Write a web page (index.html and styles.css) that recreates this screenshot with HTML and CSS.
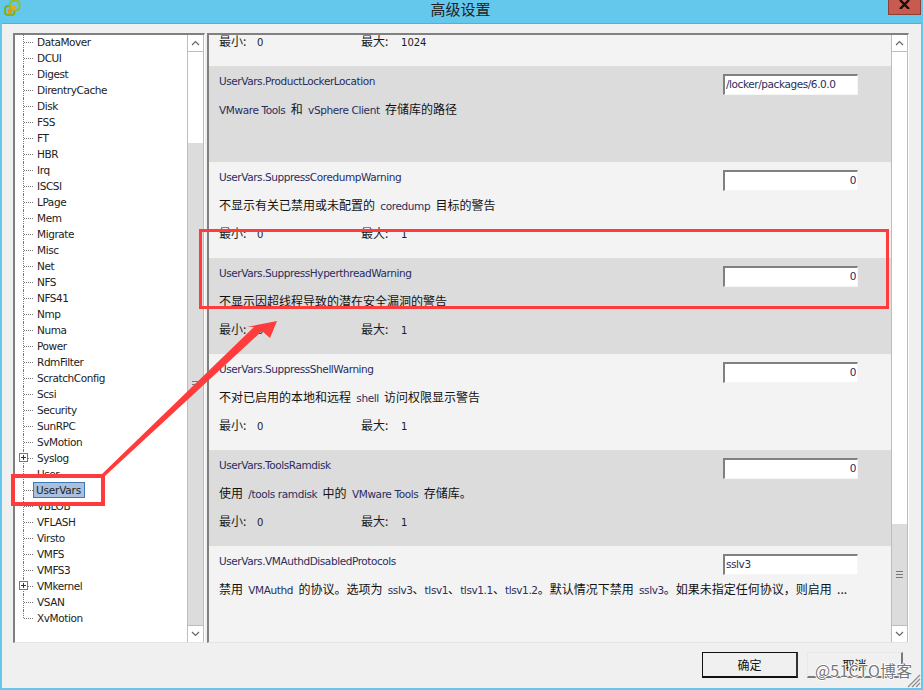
FILE: index.html
```html
<!DOCTYPE html>
<html lang="zh">
<head>
<meta charset="utf-8">
<title>高级设置</title>
<link rel="stylesheet" href="styles.css">
</head>
<body>
<div class="window">
  <header class="titlebar">
    <svg class="app-icon" width="17" height="16" viewBox="0 0 17 16">
      <rect x="1" y="6" width="9.5" height="9" rx="3" fill="none" stroke="#7faf1e" stroke-width="2"/>
      <rect x="6" y="1" width="9.5" height="9" rx="3" fill="none" stroke="#93c02a" stroke-width="2"/>
      <rect x="7" y="5" width="5" height="5" fill="#f2a51c"/>
      <rect x="4" y="9" width="4" height="4.5" fill="#e8931a"/>
    </svg>
    <span class="title">高级设置</span>
    <span class="close"><svg width="13" height="9" viewBox="0 0 13 9"><path d="M2 0 L11 9 M11 0 L2 9" stroke="#111" stroke-width="2.4"/></svg></span>
  </header>
  <main class="content">
    <div class="panes">
      <nav class="tree-pane">
        <ul class="tree">
          <li class="node"><span class="label">DataMover</span></li>
          <li class="node"><span class="label">DCUI</span></li>
          <li class="node"><span class="label">Digest</span></li>
          <li class="node"><span class="label">DirentryCache</span></li>
          <li class="node"><span class="label">Disk</span></li>
          <li class="node"><span class="label">FSS</span></li>
          <li class="node"><span class="label">FT</span></li>
          <li class="node"><span class="label">HBR</span></li>
          <li class="node"><span class="label">Irq</span></li>
          <li class="node"><span class="label">ISCSI</span></li>
          <li class="node"><span class="label">LPage</span></li>
          <li class="node"><span class="label">Mem</span></li>
          <li class="node"><span class="label">Migrate</span></li>
          <li class="node"><span class="label">Misc</span></li>
          <li class="node"><span class="label">Net</span></li>
          <li class="node"><span class="label">NFS</span></li>
          <li class="node"><span class="label">NFS41</span></li>
          <li class="node"><span class="label">Nmp</span></li>
          <li class="node"><span class="label">Numa</span></li>
          <li class="node"><span class="label">Power</span></li>
          <li class="node"><span class="label">RdmFilter</span></li>
          <li class="node"><span class="label">ScratchConfig</span></li>
          <li class="node"><span class="label">Scsi</span></li>
          <li class="node"><span class="label">Security</span></li>
          <li class="node"><span class="label">SunRPC</span></li>
          <li class="node"><span class="label">SvMotion</span></li>
          <li class="node expandable"><i class="plus"></i><span class="label">Syslog</span></li>
          <li class="node"><span class="label">User</span></li>
          <li class="node"><span class="label selected">UserVars</span></li>
          <li class="node"><span class="label">VBLOB</span></li>
          <li class="node"><span class="label">VFLASH</span></li>
          <li class="node"><span class="label">Virsto</span></li>
          <li class="node"><span class="label">VMFS</span></li>
          <li class="node"><span class="label">VMFS3</span></li>
          <li class="node expandable"><i class="plus"></i><span class="label">VMkernel</span></li>
          <li class="node"><span class="label">VSAN</span></li>
          <li class="node last"><span class="label">XvMotion</span></li>
        </ul>
        <div class="scrollbar">
          <span class="sb-btn"><svg width="9" height="6" viewBox="0 0 9 6"><path d="M1 5 L4.5 1.5 L8 5" fill="none" stroke="#666" stroke-width="1.2"/></svg></span>
          <span class="sb-track tree-track"></span>
          <span class="sb-thumb"><i class="grip"></i></span>
          <span class="sb-btn"><svg width="9" height="6" viewBox="0 0 9 6"><path d="M1 1 L4.5 4.5 L8 1" fill="none" stroke="#666" stroke-width="1.2"/></svg></span>
        </div>
      </nav>
      <section class="settings-pane">
        <div class="rows">
          <article class="row light partial">
            <div class="info"><p class="range"><span class="min">最小: <b>0</b></span><span class="max">最大: <b>1024</b></span></p></div>
          </article>
          <article class="row dark">
            <div class="info"><div class="name">UserVars.ProductLockerLocation</div><p class="desc"><span class="en">VMware Tools</span> 和 <span class="en">vSphere Client</span> 存储库的路径</p></div>
            <input class="field" type="text" value="/locker/packages/6.0.0">
          </article>
          <article class="row light">
            <div class="info"><div class="name">UserVars.SuppressCoredumpWarning</div><p class="desc">不显示有关已禁用或未配置的 <span class="en">coredump</span> 目标的警告</p><p class="range"><span class="min">最小: <b>0</b></span><span class="max">最大: <b>1</b></span></p></div>
            <input class="field num" type="text" value="0">
          </article>
          <article class="row dark">
            <div class="info"><div class="name">UserVars.SuppressHyperthreadWarning</div><p class="desc">不显示因超线程导致的潜在安全漏洞的警告</p><p class="range"><span class="min">最小: <b>0</b></span><span class="max">最大: <b>1</b></span></p></div>
            <input class="field num" type="text" value="0">
          </article>
          <article class="row light">
            <div class="info"><div class="name">UserVars.SuppressShellWarning</div><p class="desc">不对已启用的本地和远程 <span class="en">shell</span> 访问权限显示警告</p><p class="range"><span class="min">最小: <b>0</b></span><span class="max">最大: <b>1</b></span></p></div>
            <input class="field num" type="text" value="0">
          </article>
          <article class="row dark">
            <div class="info"><div class="name">UserVars.ToolsRamdisk</div><p class="desc">使用 <span class="en">/tools ramdisk</span> 中的 <span class="en">VMware Tools</span> 存储库。</p><p class="range"><span class="min">最小: <b>0</b></span><span class="max">最大: <b>1</b></span></p></div>
            <input class="field num" type="text" value="0">
          </article>
          <article class="row light">
            <div class="info"><div class="name">UserVars.VMAuthdDisabledProtocols</div><p class="desc">禁用 <span class="en">VMAuthd</span> 的协议。选项为 <span class="en">sslv3</span>、<span class="en">tlsv1</span>、<span class="en">tlsv1.1</span>、<span class="en">tlsv1.2</span>。默认情况下禁用 <span class="en">sslv3</span>。如果未指定任何协议，则启用 ...</p></div>
            <input class="field" type="text" value="sslv3">
          </article>
        </div>
        <div class="scrollbar">
          <span class="sb-btn"><svg width="9" height="6" viewBox="0 0 9 6"><path d="M1 5 L4.5 1.5 L8 5" fill="none" stroke="#666" stroke-width="1.2"/></svg></span>
          <span class="sb-track list-track"></span>
          <span class="sb-thumb"><i class="grip"></i></span>
          <span class="sb-btn"><svg width="9" height="6" viewBox="0 0 9 6"><path d="M1 1 L4.5 4.5 L8 1" fill="none" stroke="#666" stroke-width="1.2"/></svg></span>
        </div>
      </section>
    </div>
    <footer class="actions">
      <button class="btn primary" type="button">确定</button>
      <button class="btn" type="button">取消</button>
    </footer>
  </main>
  <svg class="annotations" width="923" height="690" viewBox="0 0 923 690">
    <rect class="mark thick" x="13" y="476" width="90" height="28"/>
    <rect class="mark" x="200.5" y="230.5" width="687" height="77"/>
    <polygon class="arrow" points="277,321 270,338 262,331 105,476 102,474 254,327 247,327"/>
  </svg>
  <svg class="resize-grip" width="16" height="16" viewBox="0 0 16 16"><path d="M15 3 L3 15 M15 7 L7 15 M15 11 L11 15" stroke="#8d8d8d" stroke-width="1.2"/></svg>
  <span class="watermark">@51CTO博客</span>
</div>
</body>
</html>
```
FILE: styles.css
```css
* { box-sizing: border-box; }
html, body { margin: 0; padding: 0; }
body { width: 923px; height: 690px; overflow: hidden; background: #64c7ec; font-family: "Noto Sans", "Noto Sans CJK SC", sans-serif; font-size: 11px; color: #1c1c1c; }
.window { position: relative; width: 923px; height: 690px; padding: 0 2px 2px; display: flex; flex-direction: column; }
.titlebar { height: 23px; flex: none; position: relative; display: flex; justify-content: center; }
.app-icon { position: absolute; left: 2px; top: 0; }
.title { font: 15px/18px "Noto Sans CJK SC", sans-serif; color: #222; margin-left: -2px; }
.close { position: absolute; right: 0; top: 0; width: 33px; height: 15px; background: #c75b50; border: 1px solid #8c4038; border-top: 0; display: flex; align-items: flex-start; justify-content: center; }
.content { flex: 1; background: #f0f0f0; border-top: 1px solid #8f9ca5; padding: 9px 12px 0 11px; display: flex; flex-direction: column; min-height: 0; }
.panes { display: flex; gap: 2px; height: 610px; flex: none; }
.tree-pane, .settings-pane { display: flex; border-style: solid; border-color: #808080 #fff #e4e4e4 #808080; border-width: 2px 1px 1px 2px; background: #fff; }
.tree-pane { width: 192px; }
.settings-pane { width: 702px; }
.tree { list-style: none; margin: -1px 0 0; padding: 0; flex: 1; }
.node { height: 16px; position: relative; padding-left: 22px; display: flex; align-items: center; font: 10.5px/14px "DejaVu Sans", sans-serif; letter-spacing: -.42px; color: #222; }
.node::before { content: ""; position: absolute; left: 8px; top: 0; bottom: 0; border-left: 1px dotted #777; }
.node::after { content: ""; position: absolute; left: 9px; top: 8px; width: 9px; border-top: 1px dotted #777; }
.node.last::before { bottom: 8px; }
.label { padding: 0 2px; border: 1px solid transparent; line-height: 14px; margin-left: -3px; }
.selected { background: #a9c1de; border-color: #3f7ab2; margin-left: -4px; padding: 0 3px 0 2px; height: 16px; letter-spacing: -.2px; }
.plus { position: absolute; left: 4px; top: 3px; width: 9px; height: 9px; background: linear-gradient(#333,#333) center/5px 1px no-repeat, linear-gradient(#333,#333) center/1px 5px no-repeat, #fff; border: 1px solid #777; z-index: 1; }
.scrollbar { width: 17px; flex: none; display: flex; flex-direction: column; background: #fff; border-left: 1px solid #bdbdbd; border-right: 1px solid #bdbdbd; }
.sb-btn { height: 17px; flex: none; display: flex; align-items: center; justify-content: center; background: #fff; border-bottom: 1px solid #bdbdbd; }
.sb-btn:last-child { border-bottom: 0; border-top: 1px solid #bdbdbd; height: 17px; }
.sb-track { flex: none; background: #fff; }
.tree-track { height: 91px; }
.list-track { height: 472px; }
.sb-thumb { flex: 1; background: #dcdcdc; display: flex; align-items: center; justify-content: center; }
.grip { width: 7px; height: 7px; background: repeating-linear-gradient(#777 0 1px, #dcdcdc 1px 3px); }
.rows { flex: 1; min-width: 0; }
.row { height: 96px; display: flex; justify-content: space-between; padding: 8px 33px 0 10px; }
.partial { height: 31px; padding-top: 0; }
.partial .range { margin-top: -1px; }
.light { background: #f3f3f3; }
.dark { background: #dcdcdc; }
.info { flex: 1; min-width: 0; }
.name { font: 10.5px/14px "DejaVu Sans", sans-serif; letter-spacing: -.42px; color: #2a2d5e; height: 14px; }
.desc { margin: 14px 0 0; font: 12px/14px "Noto Sans CJK SC", sans-serif; height: 14px; white-space: nowrap; word-spacing: 2.6px; color: #111; }
.en { font: 10.5px/14px "DejaVu Sans", sans-serif; letter-spacing: -.38px; word-spacing: 0; color: #2a2d5e; }
.range { margin: 14px 0 0; font: 12px/14px "Noto Sans CJK SC", sans-serif; display: flex; height: 14px; }
.min { width: 142px; }
.max { width: 100px; }
.range b { font: 10px/14px "DejaVu Sans", sans-serif; margin-left: 8px; }
.max b { margin-left: 10px; }
.field { width: 135px; height: 21px; flex: none; border-style: solid; border-color: #808080 #f6f6f6 #f6f6f6 #808080; border-width: 2px 1px 1px 2px; background: #fff; padding: 0 1px 2px; font: 10.5px/14px "DejaVu Sans", sans-serif; letter-spacing: -.42px; color: #2a2d5e; outline: 0; border-radius: 0; }
.num { text-align: right; padding-right: 1px; }
.actions { display: flex; gap: 9px; padding: 9px 6px 0 0; justify-content: flex-end; }
.btn { width: 96px; height: 26px; background: #f0f0f0; font: 12px/14px "Noto Sans CJK SC", sans-serif; color: #111; padding: 0; border-radius: 0; border-style: solid; border-width: 1px 2px 2px 1px; border-color: #e8e8e8 #7a7a7a #7a7a7a #e8e8e8; }
.primary { border-color: #111; border-width: 1px 2px 2px 1px; border-right-color: #333; }
.annotations { position: absolute; left: 0; top: 0; pointer-events: none; }
.mark { fill: none; stroke: #ff3b3b; stroke-width: 3; }
.thick { stroke-width: 4; }
.arrow { fill: #ff3b3b; }
.resize-grip { position: absolute; right: 2px; bottom: 2px; }
.watermark { position: absolute; left: 815px; top: 661px; font: 16px/19px "Noto Sans CJK SC", sans-serif; letter-spacing: .2px; color: #777; text-shadow: 1px 0 #fff, -1px 0 #fff, 0 1px #fff, 0 -1px #fff; }
```
